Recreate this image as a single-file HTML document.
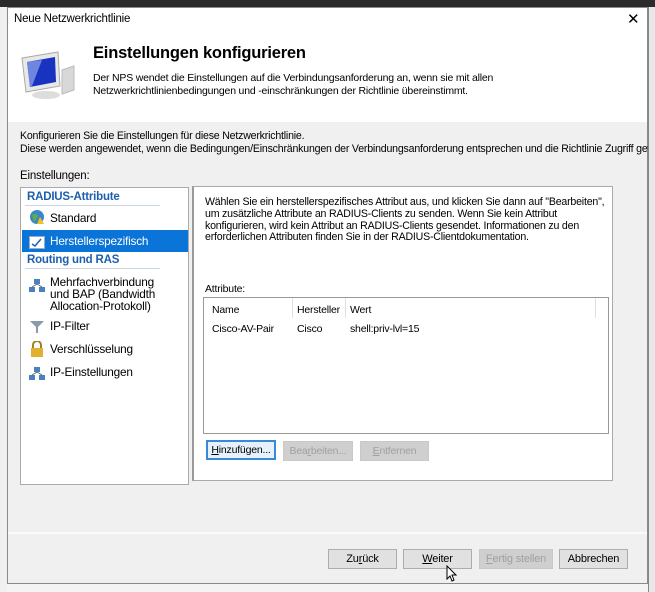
<!DOCTYPE html>
<html><head><meta charset="utf-8"><style>
*{margin:0;padding:0;box-sizing:border-box}
body{width:655px;height:592px;overflow:hidden;background:#f4f4f4;font-family:"Liberation Sans",sans-serif;font-size:11px;color:#000;position:relative;letter-spacing:-0.2px}
.a{position:absolute}
.btn{position:absolute;height:20px;border:1px solid #adadad;background:#e1e1e1;text-align:center;line-height:18px;font-size:11px}
.dis{color:#a0a0a0;border-color:#c8c8c8;background:#cfcfcf}
.item{position:absolute;left:24px;font-size:11.8px}
</style></head><body>
<div class="a" style="left:0;top:0;width:655px;height:7px;background:#2b2b2b"></div>
<div class="a" style="left:648px;top:7px;width:7px;height:585px;background:#e8e8e8;border-left:1px solid #888"></div>
<div class="a" style="left:0;top:7px;width:7px;height:585px;background:#f0f0f0"></div>
<div class="a" style="left:7px;top:7px;width:641px;height:577px;background:#f0f0f0;border:1px solid #8a8a8a"></div>
<div class="a" style="left:8px;top:8px;width:639px;height:114px;background:#fff"></div>
<div class="a" style="left:14px;top:13px;font-size:11.5px">Neue Netzwerkrichtlinie</div>
<div class="a" style="left:627px;top:10px;font-size:15px">✕</div>
<svg class="a" style="left:18px;top:48px" width="58" height="52" viewBox="0 0 58 52">
<path d="M44 22 L56 18 L56 42 L44 46Z" fill="#d8d8d8" stroke="#bbb"/>
<path d="M4 10 L40 4 L42 38 L8 44Z" fill="#e8e8e8" stroke="#aaa"/>
<path d="M9 14 L37 9 L38 34 L12 39Z" fill="#1833c0"/>
<path d="M9 14 L24 12 L14 38 L12 39Z" fill="#6f86e0"/>
<ellipse cx="28" cy="47" rx="14" ry="4" fill="#ddd"/>
</svg>
<div class="a" style="left:93px;top:44px;font-size:16.5px;font-weight:bold">Einstellungen konfigurieren</div>
<div class="a" style="left:93px;top:72px;font-size:10.5px;line-height:13px;white-space:nowrap">Der NPS wendet die Einstellungen auf die Verbindungsanforderung an, wenn sie mit allen<br>Netzwerkrichtlinienbedingungen und -einschränkungen der Richtlinie übereinstimmt.</div>
<div class="a" style="left:20px;top:130px;font-size:10.6px;line-height:12.5px;white-space:nowrap;width:628px;overflow:hidden">Konfigurieren Sie die Einstellungen für diese Netzwerkrichtlinie.<br>Diese werden angewendet, wenn die Bedingungen/Einschränkungen der Verbindungsanforderung entsprechen und die Richtlinie Zugriff gewe</div>
<div class="a" style="left:20px;top:170px;font-size:11.5px">Einstellungen:</div>
<div class="a" style="left:20px;top:187px;width:169px;height:298px;background:#fff;border:1px solid #aaa"></div>
<div class="a" style="left:27px;top:191px;font-size:11.5px;font-weight:bold;color:#1c5fb0">RADIUS-Attribute</div>
<div class="a" style="left:25px;top:205px;width:135px;height:1px;background:#c9d6ea"></div>
<svg class="a" style="left:29px;top:209px" width="16" height="16"><circle cx="8" cy="8" r="7" fill="#3a86c8"/><path d="M3 6 Q7 3 9 7 Q7 11 5 13" fill="#5bae4a"/><path d="M11 8 L15 15 L8 15Z" fill="#f0c020"/></svg>
<div class="item" style="left:50px;top:211px">Standard</div>
<div class="a" style="left:22px;top:230px;width:166px;height:22px;background:#0a74d8"></div>
<svg class="a" style="left:29px;top:235px" width="16" height="14"><rect x="0.5" y="1.5" width="15" height="12" fill="#fff" stroke="#9ac"/><path d="M3 9 L6 11 L12 4" stroke="#2060b0" fill="none" stroke-width="1.5"/></svg>
<div class="item" style="left:50px;top:234px;color:#fff">Herstellerspezifisch</div>
<div class="a" style="left:27px;top:254px;font-size:11.5px;font-weight:bold;color:#1c5fb0">Routing und RAS</div>
<div class="a" style="left:25px;top:268px;width:135px;height:1px;background:#c9d6ea"></div>
<svg class="a" style="left:29px;top:278px" width="16" height="16"><rect x="5" y="1" width="6" height="5" fill="#4a7fc0"/><rect x="0" y="9" width="6" height="5" fill="#4a7fc0"/><rect x="10" y="9" width="6" height="5" fill="#4a7fc0"/><path d="M8 6 L3 9 M8 6 L13 9" stroke="#666"/></svg>
<div class="item" style="left:50px;top:276px;line-height:12px">Mehrfachverbindung<br>und BAP (Bandwidth<br>Allocation-Protokoll)</div>
<svg class="a" style="left:29px;top:320px" width="16" height="14"><path d="M1 1 L15 1 L9 7 L9 13 L7 13 L7 7Z" fill="#8a9aa8"/></svg>
<div class="item" style="left:50px;top:319px">IP-Filter</div>
<svg class="a" style="left:29px;top:341px" width="16" height="16"><path d="M4 7 V4 a4 4 0 0 1 8 0 V7" stroke="#a08020" fill="none" stroke-width="2"/><rect x="2" y="7" width="12" height="9" fill="#e0b030"/></svg>
<div class="item" style="left:50px;top:342px">Verschlüsselung</div>
<svg class="a" style="left:29px;top:366px" width="16" height="16"><rect x="5" y="1" width="6" height="5" fill="#4a7fc0"/><rect x="0" y="9" width="6" height="5" fill="#4a7fc0"/><rect x="10" y="9" width="6" height="5" fill="#4a7fc0"/><path d="M8 6 L3 9 M8 6 L13 9" stroke="#666"/></svg>
<div class="item" style="left:50px;top:365px">IP-Einstellungen</div>
<div class="a" style="left:192px;top:186px;width:421px;height:295px;background:#fff;border:1px solid #aaa;border-left:2px solid #999"></div>
<div class="a" style="left:205px;top:197px;font-size:10.6px;line-height:11.8px;white-space:nowrap">Wählen Sie ein herstellerspezifisches Attribut aus, und klicken Sie dann auf "Bearbeiten",<br>um zusätzliche Attribute an RADIUS-Clients zu senden. Wenn Sie kein Attribut<br>konfigurieren, wird kein Attribut an RADIUS-Clients gesendet. Informationen zu den<br>erforderlichen Attributen finden Sie in der RADIUS-Clientdokumentation.</div>
<div class="a" style="left:205px;top:283px;font-size:10.5px">Attribute:</div>
<div class="a" style="left:203px;top:297px;width:406px;height:137px;background:#fff;border:1px solid #999"></div>
<div class="a" style="left:292px;top:298px;width:1px;height:20px;background:#e0e0e0"></div>
<div class="a" style="left:345px;top:298px;width:1px;height:20px;background:#e0e0e0"></div>
<div class="a" style="left:595px;top:298px;width:1px;height:20px;background:#e0e0e0"></div>
<div class="a" style="left:212px;top:304px;font-size:10.5px">Name</div>
<div class="a" style="left:297px;top:304px;font-size:10.5px">Hersteller</div>
<div class="a" style="left:350px;top:304px;font-size:10.5px">Wert</div>
<div class="a" style="left:212px;top:323px;font-size:10.5px">Cisco-AV-Pair</div>
<div class="a" style="left:297px;top:323px;font-size:10.5px">Cisco</div>
<div class="a" style="left:350px;top:323px;font-size:10.5px">shell:priv-lvl=15</div>
<div class="btn" style="left:206px;top:440px;width:70px;border:2px solid #3c88d8;background:#e5f1fb;line-height:16px;font-size:10.5px"><u>H</u>inzufügen...</div>
<div class="btn dis" style="left:283px;top:441px;width:70px;font-size:10.5px">Bea<u>r</u>beiten...</div>
<div class="btn dis" style="left:360px;top:441px;width:69px;font-size:10.5px"><u>E</u>ntfernen</div>
<div class="a" style="left:8px;top:532px;width:639px;height:2px;background:#fafafa"></div>
<div class="btn" style="left:328px;top:549px;width:69px">Zu<u>r</u>ück</div>
<div class="btn" style="left:403px;top:549px;width:69px"><u>W</u>eiter</div>
<div class="btn dis" style="left:479px;top:549px;width:74px"><u>F</u>ertig stellen</div>
<div class="btn" style="left:559px;top:549px;width:69px">Abbrechen</div>
<svg class="a" style="left:446px;top:565px" width="12" height="18"><path d="M1 1 L1 14 L4 11 L6 16 L8 15 L6 10 L10 10Z" fill="#fff" stroke="#000"/></svg>
</body></html>
